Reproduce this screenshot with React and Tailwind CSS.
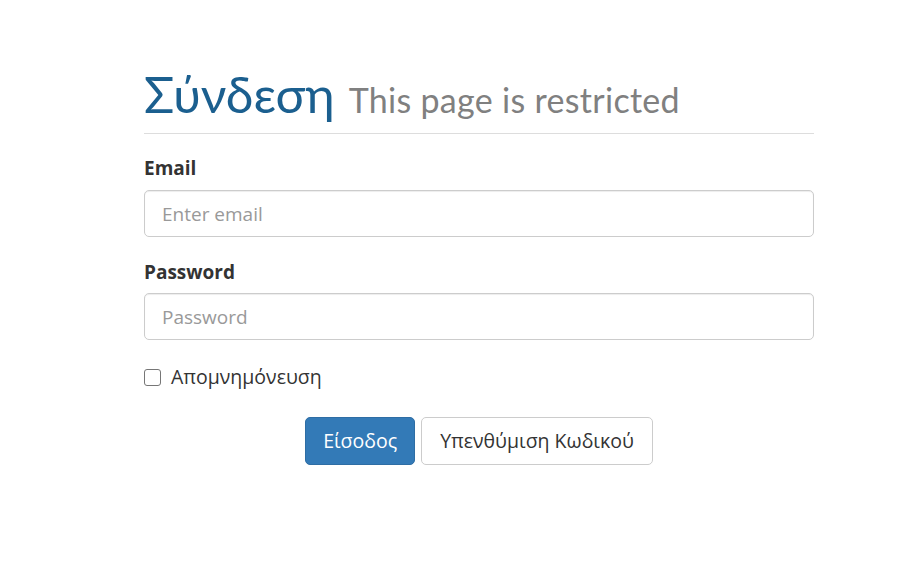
export default function App() {
  return (
    <div className="min-h-[564px] bg-white" style={{ fontFamily: '"Open Sans", sans-serif' }}>
      <div className="w-[670px] ml-[144px] pt-[67px]">
        <h1 className="flex items-baseline gap-[14px] pb-[11px] border-b border-[#dddddd] font-['Lato',sans-serif] leading-[1.1]">
          <span className="text-[50px] text-[#1b5f8f]">Σύνδεση</span>
          <span className="text-[34px] tracking-[0.3px] text-[#808080]">This page is restricted</span>
        </h1>

        <form className="mt-[21px]">
          <label className="block text-[19px] font-bold text-[#333333] leading-[26px] mb-[9px]">Email</label>
          <input
            type="email"
            placeholder="Enter email"
            className="block w-full h-[47px] px-[17px] text-[19px] border border-[#cccccc] rounded-[5px] placeholder:text-[#999999] shadow-[inset_0_1px_1px_rgba(0,0,0,0.075)] outline-none"
          />

          <label className="block text-[19px] font-bold text-[#333333] leading-[26px] mt-[22px] mb-[8px]">Password</label>
          <input
            type="password"
            placeholder="Password"
            className="block w-full h-[47px] px-[17px] text-[19px] border border-[#cccccc] rounded-[5px] placeholder:text-[#999999] shadow-[inset_0_1px_1px_rgba(0,0,0,0.075)] outline-none"
          />

          <label className="flex items-center gap-[10px] mt-[24px] h-[26px] text-[19.5px] text-[#333333]">
            <span className="w-[17px] h-[17px] border border-[#767676] rounded-[3px] bg-white" />
            Απομνημόνευση
          </label>

          <div className="flex justify-center gap-[6px] mt-[27px]">
            <button
              type="button"
              className="h-[48px] px-[17px] text-[19.5px] text-white bg-[#337ab7] border border-[#2e6da4] rounded-[5px]"
            >
              Είσοδος
            </button>
            <button
              type="button"
              className="h-[48px] px-[18px] text-[19.5px] text-[#333333] bg-white border border-[#cccccc] rounded-[5px]"
            >
              Υπενθύμιση Κωδικού
            </button>
          </div>
        </form>
      </div>
    </div>
  )
}
